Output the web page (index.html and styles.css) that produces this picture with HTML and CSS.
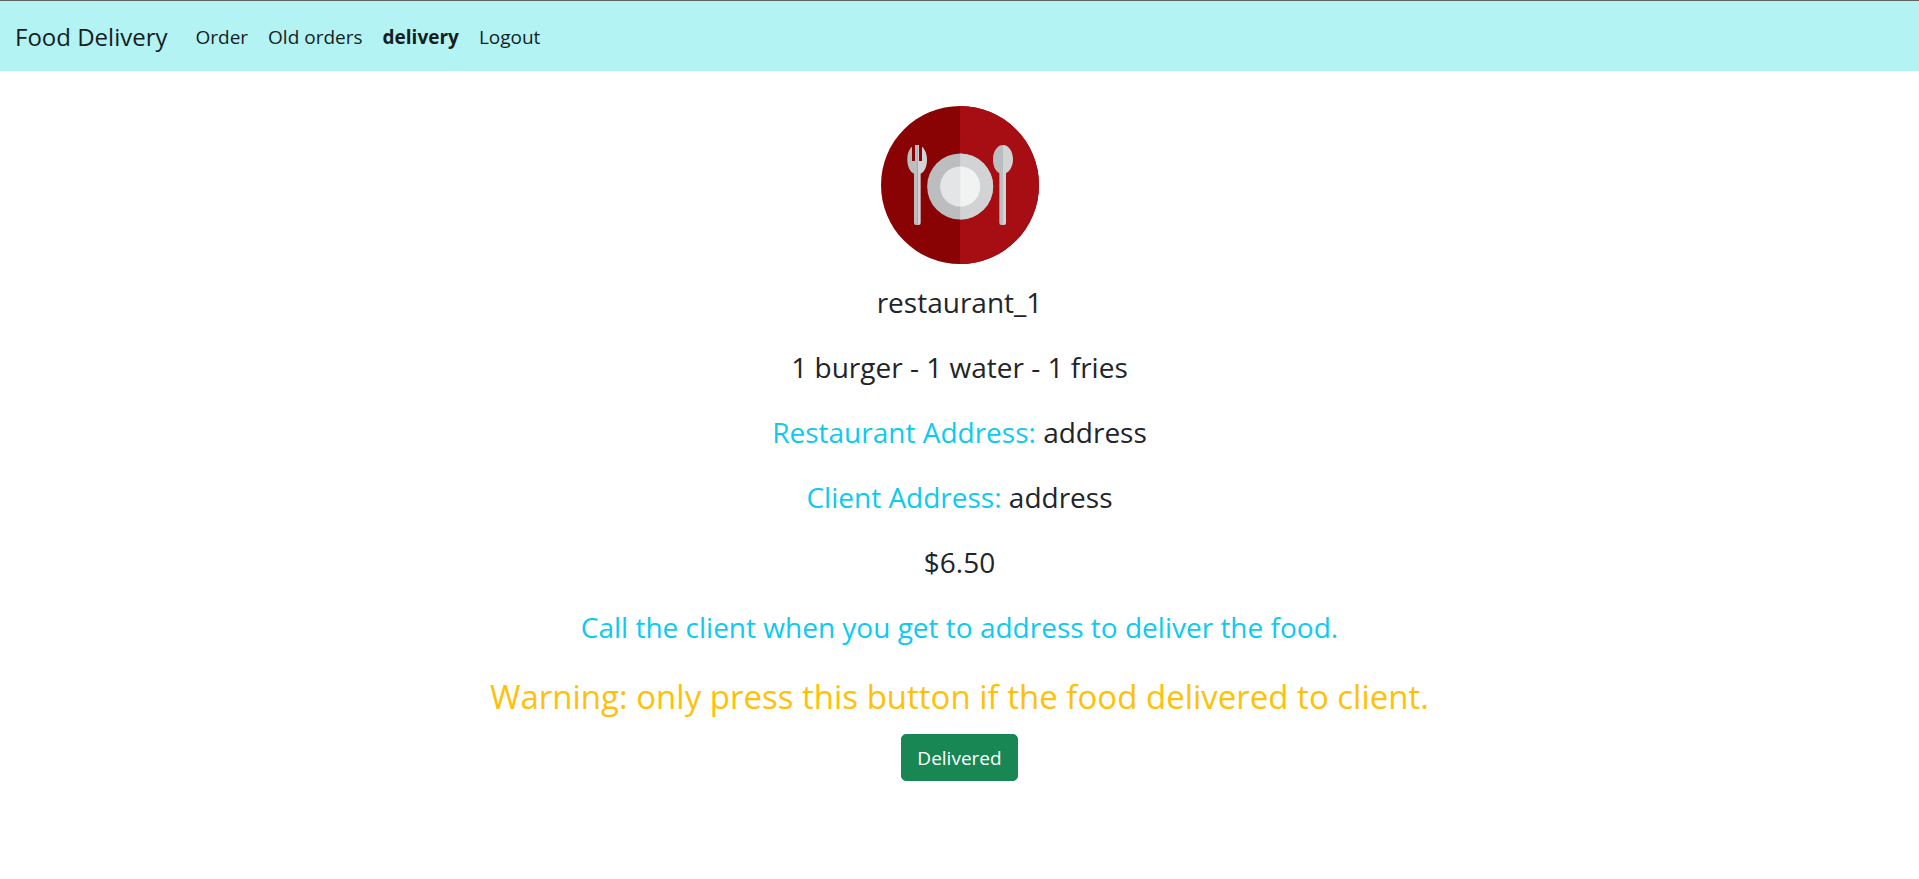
FILE: index.html
```html
<!DOCTYPE html>
<html lang="en">
<head>
<meta charset="utf-8">
<meta name="viewport" content="width=device-width, initial-scale=1">
<title>Food Delivery</title>
<link rel="stylesheet" href="styles.css">
</head>
<body>
<nav class="navbar">
  <a class="brand" href="#">Food Delivery</a>
  <a class="nav-link" href="#">Order</a>
  <a class="nav-link" href="#">Old orders</a>
  <a class="nav-link active" href="#" aria-current="page">delivery</a>
  <a class="nav-link" href="#">Logout</a>
</nav>
<main class="order">
  <svg class="logo" viewBox="33 33 474 474" role="img" aria-label="Plate with fork and spoon">
    <circle cx="270" cy="270" r="237" fill="#8a0304"/>
    <path d="M270 33a237 237 0 0 1 0 474z" fill="#a60e13"/>
    <circle cx="270.500" cy="274.500" r="99" fill="#bcbdbf"/>
    <path d="M270.500 175.500a99 99 0 0 1 0 198z" fill="#d1d3d4"/>
    <circle cx="270.500" cy="274.500" r="60" fill="#e4e5e7"/>
    <path d="M270.500 214.500a60 60 0 0 1 0 120z" fill="#f1f3f2"/>
    <path d="M126 155c-10 8-14 23-14 39 0 20 8 36 20 42v148q0 6 6 6h4V150h-7v48h-9z" fill="#bcbdbf"/>
    <path d="M142 150v240h4q6 0 6-6V236c12-6 19-22 19-42 0-16-5-31-15-39v43h-9v-48z" fill="#d1d3d4"/>
    <path d="M399 150c-17 0-30 19-30 43 0 20 7 35 19 42v149q0 6 6 6h5z" fill="#bcbdbf"/>
    <path d="M399 150c17 0 30 19 30 43 0 20-9 36-21 42v149q0 6-6 6h-3z" fill="#d1d3d4"/>
  </svg>
  <p class="line">restaurant_1</p>
  <p class="line">1 burger - 1 water - 1 fries</p>
  <p class="line"><span class="info">Restaurant Address:</span> address</p>
  <p class="line"><span class="info">Client Address:</span> address</p>
  <p class="line">$6.50</p>
  <p class="line info">Call the client when you get to address to deliver the food.</p>
  <h3 class="warning">Warning: only press this button if the food delivered to client.</h3>
  <button class="button" type="button">Delivered</button>
</main>
</body>
</html>
```
FILE: styles.css
```css
* {
  box-sizing: border-box;
}

body {
  margin: 0;
  background: #fff;
  color: #212529;
  font-family: "Segoe UI", "Open Sans", "Noto Sans", sans-serif;
  font-size: 19px;
  line-height: 30px;
}

.navbar {
  display: flex;
  align-items: center;
  padding: 11px 15px 9px;
  border-top: 1px solid #5f6566;
  background: #b3f3f3;
}

.brand,
.nav-link {
  color: #161e1e;
  text-decoration: none;
}

.brand {
  margin-right: 18px;
  padding: 6px 0;
  font-size: 24px;
  line-height: 38px;
}

.nav-link {
  padding: 10px;
}

.active {
  font-weight: 700;
}

.order {
  display: flex;
  flex-direction: column;
  align-items: center;
  padding: 35px 15px;
  text-align: center;
}

.logo {
  width: 158px;
  height: 158px;
  margin-bottom: 16px;
}

.line {
  margin: 0 0 20px;
  font-size: 28px;
  line-height: 45px;
}

.info {
  color: #0dcaf0;
}

.warning {
  margin: 0 0 10px;
  color: #ffc107;
  font-size: 33px;
  font-weight: 400;
  line-height: 54px;
}

.button {
  padding: 8px 15px 7px;
  border: 1px solid #198754;
  border-radius: 5px;
  background: #198754;
  color: #fff;
  font: inherit;
  cursor: pointer;
}
```
